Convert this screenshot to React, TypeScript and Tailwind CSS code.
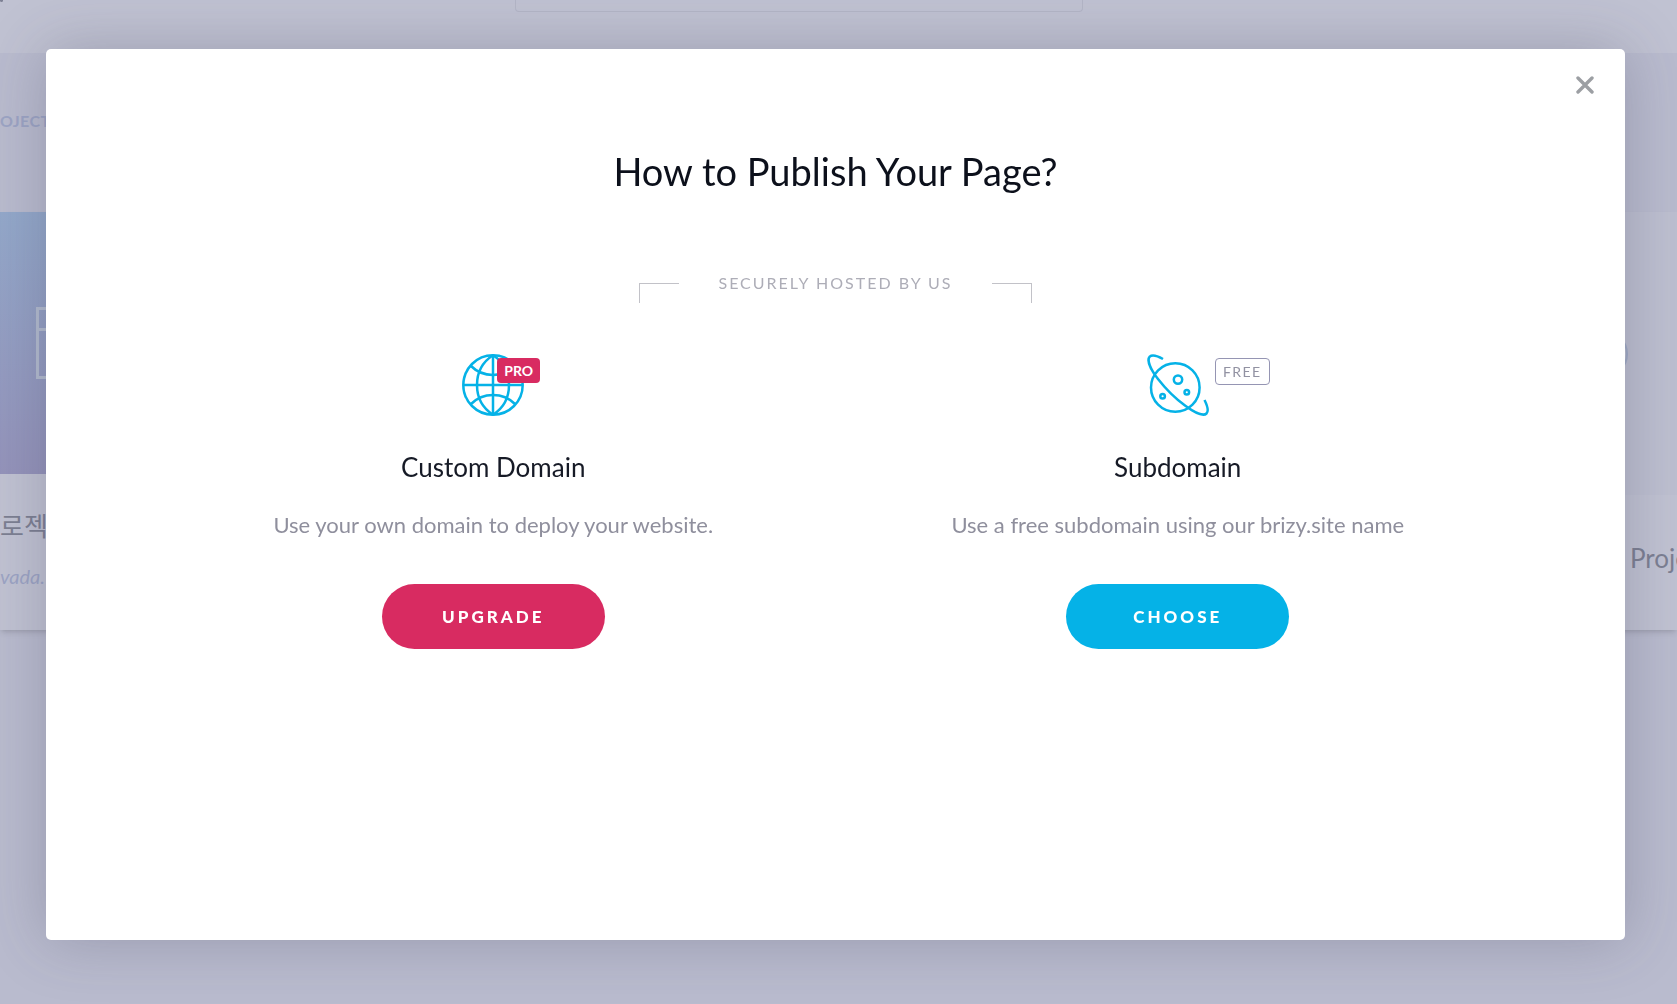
import { type ReactNode } from "react";

function GlobeIcon() {
  return (
    <svg
      viewBox="0 0 62 62"
      className="size-[62px]"
      fill="none"
      stroke="#05b2e7"
      strokeWidth="2.5"
      aria-hidden="true"
    >
      <circle cx="31" cy="31" r="29.7" />
      <path d="M31 1v60M1 31h60" />
      <path d="M31 1.3C19 9 15 19 15 31s4 22 16 29.7M31 1.3C43 9 47 19 47 31s-4 22-16 29.7" />
      <path d="M9 12c6 6 13 9 22 9s16-3 22-9M9 50c6-6 13-9 22-9s16 3 22 9" />
    </svg>
  );
}

function PlanetIcon() {
  return (
    <svg
      viewBox="0 0 62 62"
      className="size-[62px]"
      fill="none"
      stroke="#05b2e7"
      strokeWidth="2.5"
      aria-hidden="true"
    >
      <circle cx="28.3" cy="33.5" r="24.3" />
      <circle cx="31" cy="25.6" r="4.2" />
      <circle cx="39.8" cy="38.3" r="2.3" />
      <circle cx="15.6" cy="42.3" r="2.3" />
      <path d="M16 5C10 1.600 5 .6 2.700 2.600c-3 3.400.6 12.400 8.300 22.400C18 34 29 45 38 51.500c10 7.500 18.500 11 21.500 8 2.500-2.500 1-7.500-2-13.500" />
    </svg>
  );
}

function CloseIcon() {
  return (
    <svg
      viewBox="0 0 18 18"
      className="size-[18px]"
      stroke="#9c9fa3"
      strokeWidth="3.4"
      strokeLinecap="round"
      aria-hidden="true"
    >
      <path d="M2 2l14 14M16 2L2 16" />
    </svg>
  );
}

interface OptionProps {
  icon: ReactNode;
  badge: ReactNode;
  title: string;
  description: string;
  children: ReactNode;
}

function PublishOption({
  icon,
  badge,
  title,
  description,
  children,
}: OptionProps) {
  return (
    <section className="flex flex-col items-center text-center">
      <div className="relative">
        {icon}
        {badge}
      </div>
      <h2 className="mt-[31px] text-[26px] leading-10 text-[#161a26]">
        {title}
      </h2>
      <p className="mt-[22px] mb-[43px] text-[22px] leading-8 text-[#8f8f9d]">
        {description}
      </p>
      {children}
    </section>
  );
}

function Dashboard() {
  return (
    <div
      className="flex min-h-screen flex-col overflow-hidden bg-[#b9bbce]"
      aria-hidden="true"
    >
      <header className="flex h-[53px] items-start bg-[#c0c2d2] pr-[82px]">
        <div className="h-0.5 w-[3px] rounded-b bg-[#7d8094]" />
        <div className="mx-auto h-3 w-[568px] rounded-b border border-t-0 border-[#b3b5c6]" />
      </header>

      <div className="flex h-[159px] pt-14 text-base leading-6 font-bold tracking-wide text-[#9ca4c4]">
        OJECTS
      </div>

      <div className="flex h-[418px] justify-between">
        <article className="flex w-60 flex-col bg-[#c0c2d2] shadow-md">
          <div className="flex h-[262px] items-center bg-linear-to-b from-[#93a8ca] to-[#9493ba] pl-9">
            <div className="h-[72px] w-24 border-3 border-[#b3bccf]">
              <div className="h-[21px] border-b-3 border-[#b3bccf]" />
            </div>
          </div>
          <p className="mt-8 text-[26px] leading-10 text-[#7c7f92]">로젝트</p>
          <p className="mt-4 text-xl leading-7 text-[#9ca4c4] italic">vada.</p>
        </article>

        <article className="flex w-60 flex-col bg-[#c0c2d2] shadow-md">
          <div className="flex h-[283px] items-center bg-[#bdbfd0] pl-[143px]">
            <div className="size-12 rounded-full border-2 border-[#a0abc6]" />
          </div>
          <p className="mt-[43px] pl-[193px] text-[26px] leading-10 text-[#7c7f92]">
            Projects
          </p>
        </article>
      </div>
    </div>
  );
}

export default function App() {
  return (
    <div className="font-['Lato','Noto_Sans_CJK_KR',sans-serif]">
      <Dashboard />

      <div className="fixed inset-0 flex pt-[49px] pr-[52px] pb-16 pl-[46px]">
        <div
          role="dialog"
          aria-modal="true"
          aria-labelledby="publish-title"
          className="relative flex-1 rounded-[5px] bg-white px-[105px] pt-[98px] shadow-[0_0_60px_rgba(60,62,85,0.28)]"
        >
          <button
            type="button"
            aria-label="Close"
            className="absolute top-[27px] right-[31px]"
          >
            <CloseIcon />
          </button>

          <h1
            id="publish-title"
            className="text-center text-[38px] leading-12 text-[#0c101b]"
          >
            How to Publish Your Page?
          </h1>

          <div className="mt-[68px] flex items-center justify-center">
            <div className="mt-5 h-5 w-10 border-t border-l border-[#c2c2c8]" />
            <p className="px-[39px] text-base leading-6 tracking-[2px] text-[#adadb7]">
              SECURELY HOSTED BY US
            </p>
            <div className="mt-5 h-5 w-10 border-t border-r border-[#c2c2c8]" />
          </div>

          <div className="mt-[51px] grid grid-cols-2">
            <PublishOption
              icon={<GlobeIcon />}
              badge={
                <span className="absolute top-1 left-[35px] flex h-[25px] w-[43px] items-center justify-center rounded bg-[#d82b61] text-sm font-bold text-white">
                  PRO
                </span>
              }
              title="Custom Domain"
              description="Use your own domain to deploy your website."
            >
              <button
                type="button"
                className="h-[65px] w-[223px] rounded-full bg-[#d82b61] text-[17px] font-black tracking-[3px] text-white"
              >
                UPGRADE
              </button>
            </PublishOption>

            <PublishOption
              icon={<PlanetIcon />}
              badge={
                <span className="absolute top-1 left-[68px] flex h-[27px] w-[55px] items-center justify-center rounded border border-[#9595b3] text-sm tracking-widest text-[#9292a2]">
                  FREE
                </span>
              }
              title="Subdomain"
              description="Use a free subdomain using our brizy.site name"
            >
              <button
                type="button"
                className="h-[65px] w-[223px] rounded-full bg-[#05b2e7] text-[17px] font-black tracking-[3px] text-white"
              >
                CHOOSE
              </button>
            </PublishOption>
          </div>
        </div>
      </div>
    </div>
  );
}
